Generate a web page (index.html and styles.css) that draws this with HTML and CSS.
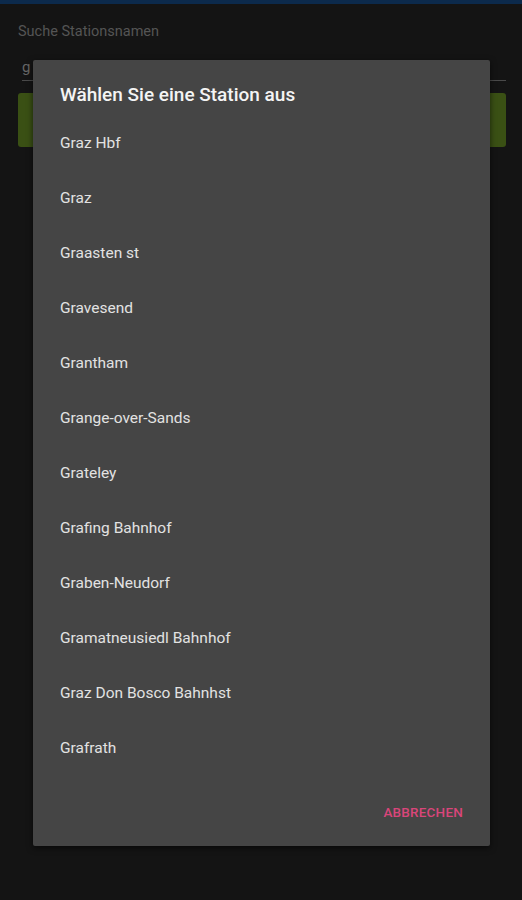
FILE: index.html
```html
<!DOCTYPE html>
<html lang="de">
<head>
<meta charset="utf-8">
<link rel="stylesheet" href="styles.css">
</head>
<body>
<div class="topbar"></div>
<main class="page">
  <div class="label">Suche Stationsnamen</div>
  <div class="input">g</div>
  <div class="button"></div>
</main>
<div class="dialog">
  <h1 class="title">Wählen Sie eine Station aus</h1>
  <ul class="list">
    <li>Graz Hbf</li>
    <li>Graz</li>
    <li>Graasten st</li>
    <li>Gravesend</li>
    <li>Grantham</li>
    <li>Grange-over-Sands</li>
    <li>Grateley</li>
    <li>Grafing Bahnhof</li>
    <li>Graben-Neudorf</li>
    <li>Gramatneusiedl Bahnhof</li>
    <li>Graz Don Bosco Bahnhst</li>
    <li>Grafrath</li>
  </ul>
  <div class="actions"><span class="cancel">ABBRECHEN</span></div>
</div>
</body>
</html>
```
FILE: styles.css
```css
html, body {
  margin: 0;
  padding: 0;
  background: #141414;
  font-family: Roboto, "Liberation Sans", sans-serif;
  width: 522px;
  height: 900px;
  overflow: hidden;
}
.topbar {
  height: 4px;
  background: #0c2a4c;
}
.page {
  padding: 19px 16px 0 18px;
}
.label {
  color: #555;
  font-size: 14.5px;
  line-height: 18px;
}
.input {
  margin-top: 16px;
  margin-left: 4px;
  color: #666;
  font-size: 15px;
  line-height: 20px;
  border-bottom: 1px solid #4a4a4a;
  padding-bottom: 3px;
}
.button {
  margin-top: 12px;
  height: 54px;
  background: #3a5014;
  border-radius: 3px;
}
.dialog {
  position: absolute;
  left: 33px;
  top: 60px;
  width: 457px;
  height: 786px;
  box-sizing: border-box;
  background: #454545;
  border-radius: 2px;
  box-shadow: 0 2px 6px rgba(0,0,0,0.6);
  padding: 24px 27px 16px 27px;
  display: flex;
  flex-direction: column;
}
.title {
  margin: 0;
  font-size: 19px;
  font-weight: 500;
  line-height: 22px;
  color: #f4f4f4;
}
.list {
  list-style: none;
  margin: 10px 0 0 0;
  padding: 0;
}
.list li {
  height: 55px;
  line-height: 55px;
  font-size: 15.5px;
  color: #e2e2e2;
}
.actions {
  margin-top: 18px;
  height: 36px;
  display: flex;
  justify-content: flex-end;
  align-items: center;
}
.cancel {
  color: #d9457a;
  font-size: 13.5px;
  font-weight: 500;
  letter-spacing: 0.2px;
}
```
